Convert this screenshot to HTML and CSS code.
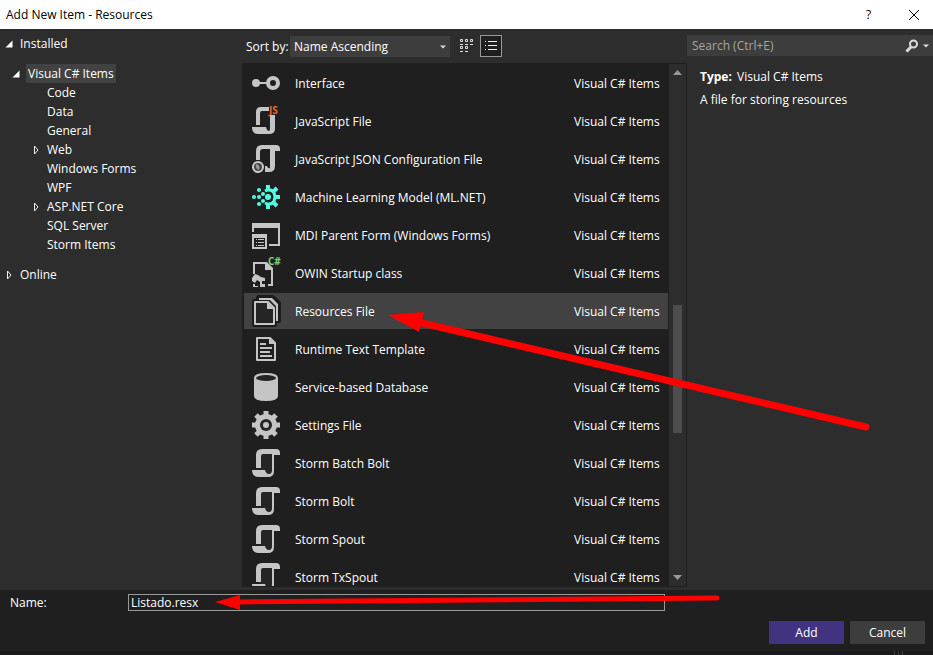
FILE: index.html
```html
<!DOCTYPE html>
<html lang="en">
<head>
    <meta charset="UTF-8">
    <meta name="viewport" content="width=device-width, initial-scale=1.0">
    <title>Add New Item - Resources</title>
    <link rel="stylesheet" href="styles.css">
</head>
<body>

    <!-- icon shapes -->
    <svg class="sprite" aria-hidden="true">
        <symbol id="i-open" viewBox="0 0 8 8"><path d="M7.5 0.5V7.5H0.5Z" fill="#fff"/></symbol>
        <symbol id="i-closed" viewBox="0 0 8 10"><path d="M2.5 1V9L6 5Z" fill="none" stroke="#eee"/></symbol>
        <symbol id="i-down" viewBox="0 0 6 4"><path d="M0 0.5H6L3 3.5Z" fill="#ddd"/></symbol>
        <symbol id="i-interface" viewBox="0 0 32 32">
            <circle cx="6" cy="16" r="4"/>
            <path d="M6 15H18V17H6Z"/>
            <circle cx="23" cy="16" r="5" fill="none" stroke="#c5c5c5" stroke-width="4"/>
        </symbol>
        <symbol id="i-scroll" viewBox="0 0 32 32">
            <path d="M10 6H23V28H14L10 22Z" fill="#252525"/>
            <path d="M6 21V8Q6 2 12 2H26Q30 2 30 6V8H24V24Q24 30 18 30H9Q2 30 2 23H15Q16 27 19 27Q22 27 22 23V7H13Q11 7 11 9V21Z"/>
        </symbol>
        <symbol id="i-json" viewBox="0 0 32 32">
            <path d="M6 17V8Q6 2 12 2H26Q30 2 30 6V8H25V23Q25 29 19 29H15V23H17Q18 26 20 25V6H13Q10 6 10 9V17Z"/>
            <circle cx="8" cy="24" r="5" fill="#444" stroke="#ccc" stroke-width="2"/>
            <path d="M6 21Q11 22 9 27Q5 26 6 21Z" fill="#999"/>
        </symbol>
        <symbol id="i-ml" viewBox="0 0 32 32">
            <g stroke="#4dffe5" fill="none">
                <path d="M15 10Q21 7 24 12Q26 16 24 20Q21 25 15 22" stroke-width="3"/>
                <path d="M18 4V9M18 28V23M25 16H30M23 11L27 7M23 21L27 25" stroke-width="4"/>
            </g>
            <g fill="#4dffe5">
                <circle cx="18" cy="16" r="3"/>
                <circle cx="9" cy="9" r="2"/><circle cx="9" cy="23" r="2"/>
                <circle cx="4" cy="16" r="2"/><circle cx="9" cy="16" r="2"/>
                <circle cx="13" cy="13" r="2"/><circle cx="13" cy="20" r="2"/>
            </g>
        </symbol>
        <symbol id="i-mdi" viewBox="0 0 32 32">
            <path d="M2 4H30V27H19V25H28V9H4V13H2Z"/>
            <path d="M2 15H17V30H2ZM4 19V28H15V19Z" fill-rule="evenodd"/>
            <path d="M6 20H7V21H6ZM8 20H14V21H8ZM6 23H7V24H6ZM8 23H14V24H8ZM6 26H7V27H6ZM8 26H14V27H8Z"/>
        </symbol>
        <symbol id="i-resources" viewBox="0 0 32 32">
            <path d="M8 2H23L29 8V26H25V30H4V6H8Z" fill="#252525" stroke="#1c1c1c" stroke-width="4" stroke-linejoin="round"/>
            <path d="M9 4V3H22L28 9V26H26V11L20 5H9Z"/>
            <path d="M5 7H18L24 13V29H5Z" fill="#252525" stroke="#c5c5c5" stroke-width="2" stroke-linejoin="round"/>
            <path d="M17 7V14H24Z"/>
        </symbol>
        <symbol id="i-text" viewBox="0 0 32 32">
            <path d="M7 5H20L25 10V27H7Z" fill="none" stroke="#c5c5c5" stroke-width="2" stroke-linejoin="round"/>
            <path d="M19 5V11H25ZM10 10H16V12H10ZM10 14H22V16H10ZM10 18H20V20H10ZM10 22H22V24H10Z"/>
        </symbol>
        <symbol id="i-database" viewBox="0 0 32 32">
            <path d="M4 7Q4 2 16 2Q28 2 28 7V25Q28 30 16 30Q4 30 4 25Z"/>
            <ellipse cx="16" cy="7" rx="10" ry="3" fill="#252525"/>
        </symbol>
        <symbol id="i-gear" viewBox="0 0 32 32">
            <g stroke="#c5c5c5" stroke-width="5">
                <path d="M16 2V30M2 16H30M6 6L26 26M26 6L6 26"/>
            </g>
            <circle cx="16" cy="16" r="11"/>
            <circle cx="16" cy="16" r="6" fill="#252525"/>
            <circle cx="16" cy="16" r="3"/>
        </symbol>
    </svg>

    <header class="titlebar">
        <h1>Add New Item - Resources</h1>
        <button class="win-btn" aria-label="Help">?</button>
        <button class="win-btn" aria-label="Close">
            <svg width="12" height="12" viewBox="0 0 12 12"><path d="M1 1L11 11M11 1L1 11" stroke="#000" fill="none"/></svg>
        </button>
    </header>

    <main class="content">
        <nav class="tree">
            <ul>
                <li><a href="#"><svg class="arrow"><use href="#i-open"/></svg>Installed</a>
                    <ul class="level-2">
                        <li><a href="#"><svg class="arrow"><use href="#i-open"/></svg><span class="current">Visual C# Items</span></a>
                            <ul class="level-3">
                                <li><a href="#">Code</a></li>
                                <li><a href="#">Data</a></li>
                                <li><a href="#">General</a></li>
                                <li><a href="#"><svg class="arrow"><use href="#i-closed"/></svg>Web</a></li>
                                <li><a href="#">Windows Forms</a></li>
                                <li><a href="#">WPF</a></li>
                                <li><a href="#"><svg class="arrow"><use href="#i-closed"/></svg>ASP.NET Core</a></li>
                                <li><a href="#">SQL Server</a></li>
                                <li><a href="#">Storm Items</a></li>
                            </ul>
                        </li>
                    </ul>
                </li>
                <li><a href="#"><svg class="arrow"><use href="#i-closed"/></svg>Online</a></li>
            </ul>
        </nav>

        <section class="templates">
            <div class="toolbar">
                <label for="sortSelect">Sort by:</label>
                <div class="select-box">
                    <select id="sortSelect">
                        <option>Name Ascending</option>
                        <option>Name Descending</option>
                        <option>Default</option>
                    </select>
                    <svg class="caret"><use href="#i-down"/></svg>
                </div>
                <button class="view-btn" aria-label="Small icons">
                    <svg width="16" height="16" viewBox="0 0 16 16" fill="none" stroke="#ddd">
                        <path d="M2.5 1.5h2v2h-2zM7.5 1.5h2v2h-2zM12.5 1.5h2v2h-2zM2.5 8.5h2v2h-2zM7.5 8.5h2v2h-2zM2 6.5h3M7 6.5h3M12 6.5h3M2 13.5h3M7 13.5h3"/>
                    </svg>
                </button>
                <button class="view-btn active" aria-label="List">
                    <svg width="16" height="16" viewBox="0 0 16 16" stroke="#eee">
                        <path d="M2 3.5h1M5 3.5h9M2 7.5h1M5 7.5h9M2 11.5h1M5 11.5h9"/>
                    </svg>
                </button>
            </div>
            <div class="list-box">
                <div class="list-scroll">
                    <table class="list" aria-label="Templates">
                        <tbody>
                            <tr><td class="icon"><svg><use href="#i-interface"/></svg></td><td>Interface</td><td class="type">Visual C# Items</td></tr>
                            <tr>
                                <td class="icon">
                                    <svg viewBox="0 0 32 32">
                                        <path d="M6 20V7Q6 2 11 2H19V6H12Q10 6 10 8V20Z"/>
                                        <path d="M20 10H25V24Q25 29 19 29H8Q2 29 2 22H16Q17 26 19 26Q20 26 20 23Z"/>
                                        <text x="19" y="9" class="tag tag-js">JS</text>
                                    </svg>
                                </td>
                                <td>JavaScript File</td><td class="type">Visual C# Items</td>
                            </tr>
                            <tr><td class="icon"><svg><use href="#i-json"/></svg></td><td>JavaScript JSON Configuration File</td><td class="type">Visual C# Items</td></tr>
                            <tr><td class="icon"><svg><use href="#i-ml"/></svg></td><td>Machine Learning Model (ML.NET)</td><td class="type">Visual C# Items</td></tr>
                            <tr><td class="icon"><svg><use href="#i-mdi"/></svg></td><td>MDI Parent Form (Windows Forms)</td><td class="type">Visual C# Items</td></tr>
                            <tr>
                                <td class="icon">
                                    <svg viewBox="0 0 32 32">
                                        <path d="M3 5H17L23 11V29H18V27H21V13H15V7H5V17H3Z"/>
                                        <path d="M2 21L5 17L8 18L11 20L15 21V24H12V27H15V30H10V25L7 23L5 26L2 24Z"/>
                                        <path d="M3 27H5V29H8V30H3Z"/>
                                        <text x="18" y="8" class="tag tag-cs">C#</text>
                                    </svg>
                                </td>
                                <td>OWIN Startup class</td><td class="type">Visual C# Items</td>
                            </tr>
                            <tr class="selected"><td class="icon"><svg><use href="#i-resources"/></svg></td><td>Resources File</td><td class="type">Visual C# Items</td></tr>
                            <tr><td class="icon"><svg><use href="#i-text"/></svg></td><td>Runtime Text Template</td><td class="type">Visual C# Items</td></tr>
                            <tr><td class="icon"><svg><use href="#i-database"/></svg></td><td>Service-based Database</td><td class="type">Visual C# Items</td></tr>
                            <tr><td class="icon"><svg><use href="#i-gear"/></svg></td><td>Settings File</td><td class="type">Visual C# Items</td></tr>
                            <tr><td class="icon"><svg><use href="#i-scroll"/></svg></td><td>Storm Batch Bolt</td><td class="type">Visual C# Items</td></tr>
                            <tr><td class="icon"><svg><use href="#i-scroll"/></svg></td><td>Storm Bolt</td><td class="type">Visual C# Items</td></tr>
                            <tr><td class="icon"><svg><use href="#i-scroll"/></svg></td><td>Storm Spout</td><td class="type">Visual C# Items</td></tr>
                            <tr><td class="icon"><svg><use href="#i-scroll"/></svg></td><td>Storm TxSpout</td><td class="type">Visual C# Items</td></tr>
                        </tbody>
                    </table>
                </div>
                <div class="scrollbar" aria-hidden="true">
                    <svg width="9" height="5" viewBox="0 0 9 5"><path d="M0 5H9L4.5 0Z" fill="#999"/></svg>
                    <div class="track">
                        <div class="before"></div>
                        <div class="thumb"></div>
                        <div class="after"></div>
                    </div>
                    <svg width="9" height="5" viewBox="0 0 9 5"><path d="M0 0H9L4.5 5Z" fill="#999"/></svg>
                </div>
            </div>
        </section>

        <aside class="details">
            <div class="search">
                <input type="search" placeholder="Search (Ctrl+E)" aria-label="Search">
                <button aria-label="Search options">
                    <svg width="14" height="14" viewBox="0 0 14 14" fill="none" stroke="#ddd">
                        <circle cx="8.5" cy="5" r="3.5" stroke-width="2"/><path d="M6 8L1.5 12.5" stroke-width="3"/>
                    </svg>
                    <svg class="caret-sm"><use href="#i-down"/></svg>
                </button>
            </div>
            <div class="info">
                <p><strong>Type:</strong> Visual C# Items</p>
                <p>A file for storing resources</p>
            </div>
        </aside>
    </main>

    <footer class="footer">
        <div class="name-row">
            <label for="nameInput">Name:</label>
            <input type="text" id="nameInput" value="Listado.resx">
        </div>
        <div class="actions">
            <button class="btn primary">Add</button>
            <button class="btn">Cancel</button>
        </div>
    </footer>
    <div class="edge"><i></i><i></i><i></i></div>

    <!-- red arrows over the dialog -->
    <svg class="marks" width="933" height="655" viewBox="0 0 933 655" aria-hidden="true">
        <path d="M388 315L424 312L419 332Z"/>
        <path d="M418 322L866 427" class="line-1"/>
        <path d="M215 602L240 595V610Z"/>
        <path d="M238 602L717 598" class="line-2"/>
    </svg>

</body>
</html>
```
FILE: styles.css
```css
* {
    box-sizing: border-box;
}
body {
    margin: 0;
    height: 100vh;
    display: flex;
    flex-direction: column;
    position: relative;
    overflow: hidden;
    background-color: #2d2d2d;
    color: #fff;
    font-family: "Segoe UI", "Open Sans", "Noto Sans", sans-serif;
    font-size: 12px;
    line-height: 19px;
}
button, input, select {
    font: inherit;
    color: inherit;
    border: none;
    border-radius: 0;
    padding: 0;
    background: none;
}
ul {
    list-style: none;
    margin: 0;
    padding: 0;
}
a {
    color: inherit;
    text-decoration: none;
}
svg {
    display: block;
    flex: none;
}
.sprite {
    position: absolute;
    width: 0;
    height: 0;
}

/* title bar */
.titlebar {
    display: flex;
    align-items: center;
    height: 29px;
    flex: none;
    background-color: #fff;
    color: #000;
}
.titlebar h1 {
    flex: 1;
    margin: 0;
    padding-left: 6px;
    font-size: 12px;
    font-weight: normal;
}
.win-btn {
    display: flex;
    align-items: center;
    justify-content: center;
    width: 51px;
    height: 28px;
}
.win-btn:last-child {
    width: 39px;
}

.content {
    flex: 1;
    min-height: 0;
    display: grid;
    grid-template-columns: 242px 1fr 246px;
    padding-bottom: 3px;
}

/* category tree */
.tree {
    padding: 5px 0 0 4px;
}
.tree a {
    display: flex;
    align-items: center;
    height: 19px;
    padding-left: 16px;
}
.tree .arrow {
    width: 8px;
    height: 10px;
    margin-left: -15px;
    margin-right: 7px;
}
.level-2 {
    padding: 11px 0 11px 8px;
}
.level-3 {
    padding-left: 19px;
}
.level-2 > li > a {
    padding-left: 14px;
}
.level-2 > li > a > .arrow {
    margin-left: -14px;
    margin-right: 6px;
}
.current {
    padding: 0 2px;
    background-color: #424242;
}

/* template list */
.templates {
    display: flex;
    flex-direction: column;
    min-height: 0;
}
.toolbar {
    display: flex;
    align-items: center;
    height: 34px;
    padding-left: 4px;
}
.toolbar label {
    width: 44px;
    white-space: nowrap;
}
.select-box {
    position: relative;
    width: 160px;
}
.select-box select {
    display: block;
    width: 100%;
    height: 21px;
    padding-left: 4px;
    appearance: none;
    background-color: #3d3d3d;
}
.caret {
    position: absolute;
    right: 4px;
    top: 9px;
    width: 6px;
    height: 4px;
    pointer-events: none;
}
.view-btn {
    display: flex;
    align-items: center;
    justify-content: center;
    width: 22px;
    height: 22px;
    margin-left: 5px;
}
.view-btn.active {
    margin-left: 3px;
    border: 1px solid #999;
    background-color: #1f1f1f;
}
.list-box {
    flex: 1;
    min-height: 0;
    display: flex;
    padding: 1px 1px 1px 2px;
    background-color: #1f1f1f;
}
.list-scroll {
    flex: 1;
    overflow: hidden;
}
.list {
    width: 100%;
    border-collapse: separate;
    border-spacing: 0;
}
.list td {
    height: 38px;
    padding: 0;
    border-top: 1px solid #1f1f1f;
    border-bottom: 1px solid #1f1f1f;
}
.list .icon {
    width: 51px;
    padding-left: 6px;
}
.icon svg {
    width: 32px;
    height: 32px;
    fill: #c5c5c5;
}
.list .type {
    width: 94px;
}
.list .selected {
    background-color: #424242;
}
.tag {
    font-size: 10px;
    font-weight: bold;
}
.icon .tag-js {
    fill: #f16421;
}
.icon .tag-cs {
    fill: #7fce7a;
}
.scrollbar {
    display: flex;
    flex-direction: column;
    align-items: center;
    width: 17px;
    margin-left: 1px;
    padding: 6px 0;
    background-color: #2d2d2d;
}
.track {
    flex: 1;
    display: flex;
    flex-direction: column;
    width: 9px;
}
.before {
    flex: 230;
}
.thumb {
    flex: 127;
    background-color: #4d4d4d;
}
.after {
    flex: 142;
}

/* details */
.search {
    display: flex;
    height: 21px;
    margin-top: 6px;
    background-color: #3d3d3d;
}
.search input {
    flex: 1;
    min-width: 0;
    padding-left: 5px;
    outline: none;
}
.search input::placeholder {
    color: #a5a5a5;
}
.search button {
    display: flex;
    align-items: center;
    gap: 4px;
    padding-right: 4px;
}
.caret-sm {
    width: 6px;
    height: 4px;
}
.info {
    padding: 11px 13px;
}
.info p {
    margin: 0 0 4px;
}
.info strong {
    margin-right: 2px;
}

/* footer */
.footer {
    flex: none;
    padding: 3px 8px 7px 10px;
    background-color: #1f1f1f;
}
.name-row {
    display: flex;
    align-items: center;
}
.name-row label {
    width: 118px;
}
.name-row input {
    flex: 1;
    height: 17px;
    margin-right: 260px;
    padding-left: 2px;
    border: 1px solid #999;
}
.actions {
    display: flex;
    justify-content: flex-end;
    gap: 6px;
    padding-top: 9px;
}
.btn {
    width: 75px;
    height: 23px;
    background-color: #3d3d3d;
}
.btn.primary {
    background-color: #413380;
}
.edge {
    display: flex;
    justify-content: flex-end;
    gap: 3px;
    height: 4px;
    flex: none;
    padding-right: 30px;
    background-color: #191919;
}
.edge i {
    width: 1px;
    background-color: #3d3d3d;
}

.marks {
    position: absolute;
    left: 0;
    top: 0;
    fill: #f00;
    stroke-linecap: round;
    pointer-events: none;
}
.line-1 {
    stroke: #f00;
    stroke-width: 7px;
}
.line-2 {
    stroke: #f00;
    stroke-width: 5px;
}
```
